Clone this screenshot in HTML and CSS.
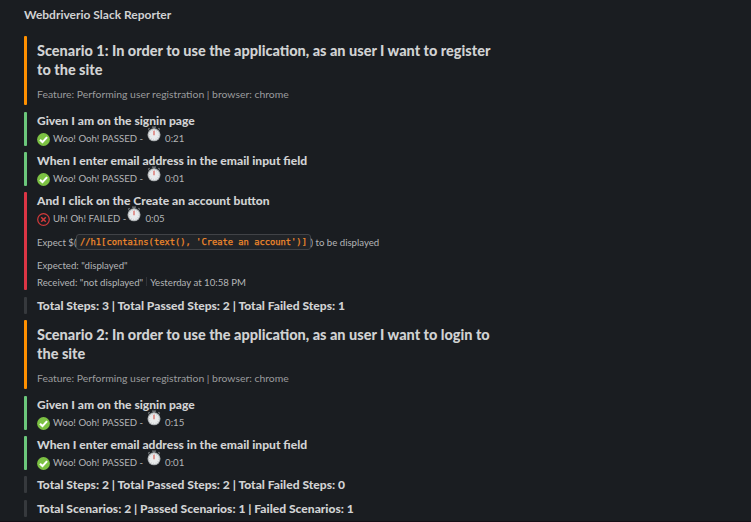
FILE: index.html
```
<!DOCTYPE html>
<html lang="en">
<head>
<meta charset="utf-8">
<title>Webdriverio Slack Reporter</title>
<link rel="stylesheet" href="styles.css">
</head>
<body>
<svg class="defs" aria-hidden="true">
  <symbol id="check" viewBox="0 0 13 13"><circle cx="6.5" cy="6.5" r="6.4" fill="#7cc143"/><path d="M3 6.7l2.5 2.4 4.6-5" fill="none" stroke="#fff" stroke-width="2.1"/></symbol>
  <symbol id="cross" viewBox="0 0 13 13"><circle cx="6.5" cy="6.5" r="5.8" fill="none" stroke="#d23a3b" stroke-width="1.2"/><path d="M4.2 4.2l4.6 4.6m0-4.6L4.2 8.8" fill="none" stroke="#d23a3b" stroke-width="1.5"/></symbol>
  <symbol id="watch" viewBox="0 0 16 16"><path d="M6 1.2h4M8 1v2M2.2 3.4l1.4-1.2M13.8 3.4l-1.4-1.2" stroke="#777b7e" stroke-width="1.3" fill="none"/><circle cx="8" cy="8.8" r="6.5" fill="#a9adb0"/><circle cx="8" cy="8.8" r="5.5" fill="#e9ebec"/><circle cx="8" cy="8.8" r="4.6" fill="none" stroke="#b9bdc0" stroke-width=".8" stroke-dasharray=".8 1.55"/><path d="M8 4.8v4.5" stroke="#d9534b" stroke-width="1.1"/></symbol>
</svg>
<main class="message">
  <h1 class="title"><span>Webdriverio Slack Reporter</span></h1>

  <section class="block scenario">
    <h2>Scenario 1: In order to use the application, as an user I want to register<br>to the site</h2>
    <p class="feature">Feature: Performing user registration | browser: chrome</p>
  </section>
  <section class="block passed">
    <h3>Given I am on the signin page</h3>
    <p class="result"><svg class="status"><use href="#check"/></svg><span class="label">Woo! Ooh! PASSED -</span><svg class="watch"><use href="#watch"/></svg><span>0:21</span></p>
  </section>
  <section class="block passed">
    <h3>When I enter email address in the email input field</h3>
    <p class="result"><svg class="status"><use href="#check"/></svg><span class="label">Woo! Ooh! PASSED -</span><svg class="watch"><use href="#watch"/></svg><span>0:01</span></p>
  </section>
  <section class="block failed">
    <h3>And I click on the Create an account button</h3>
    <p class="result"><svg class="status"><use href="#cross"/></svg><span class="label">Uh! Oh! FAILED -</span><svg class="watch"><use href="#watch"/></svg><span>0:05</span></p>
    <p class="expect">Expect $(<code>//h1[contains(text(), 'Create an account')]</code>) to be displayed</p>
    <p class="detail">Expected: "displayed"</p>
    <p class="detail">Received: "not displayed"<i class="divider"></i>Yesterday at 10:58 PM</p>
  </section>
  <section class="block total"><h3>Total Steps: 3 | Total Passed Steps: 2 | Total Failed Steps: 1</h3></section>

  <section class="block scenario">
    <h2>Scenario 2: In order to use the application, as an user I want to login to<br>the site</h2>
    <p class="feature">Feature: Performing user registration | browser: chrome</p>
  </section>
  <section class="block passed">
    <h3>Given I am on the signin page</h3>
    <p class="result"><svg class="status"><use href="#check"/></svg><span class="label">Woo! Ooh! PASSED -</span><svg class="watch"><use href="#watch"/></svg><span>0:15</span></p>
  </section>
  <section class="block passed">
    <h3>When I enter email address in the email input field</h3>
    <p class="result"><svg class="status"><use href="#check"/></svg><span class="label">Woo! Ooh! PASSED -</span><svg class="watch"><use href="#watch"/></svg><span>0:01</span></p>
  </section>
  <section class="block total"><h3>Total Steps: 2 | Total Passed Steps: 2 | Total Failed Steps: 0</h3></section>
  <section class="block total"><h3>Total Scenarios: 2 | Passed Scenarios: 1 | Failed Scenarios: 1</h3></section>
</main>
</body>
</html>
```

FILE: styles.css
```
* { box-sizing: border-box; margin: 0; padding: 0; }
body { height: 522px; overflow: hidden; background: #1a1d21; border-bottom: 1px solid #160f17; font-family: Lato, "Liberation Sans", sans-serif; color: #d1d2d3; white-space: nowrap; }
.defs { position: absolute; width: 0; height: 0; }
.message { display: flex; flex-direction: column; gap: 6px; padding: 6px 24px 0; }
.title { height: 24px; font-size: 12px; line-height: 18px; font-weight: 700; }
.block { padding-left: 13px; position: relative; }
.block::before { content: ""; position: absolute; left: 0; top: 0; bottom: 0; width: 3px; border-radius: 1px; background: #36393d; }
.scenario { height: 69px; margin-bottom: 1px; padding-top: 5px; }
.scenario::before { background: #ff9000; }
.passed { height: 34px; }
.passed::before { background: #6bc77b; }
.failed { height: 98px; margin-bottom: 1px; }
.failed::before { background: #dc3545; }
.total { height: 17px; }
.total + .total { margin-top: 1px; }
h2 { font-size: 14.49px; line-height: 19px; font-weight: 900; }
h3 { font-size: 12.07px; line-height: 17px; font-weight: 900; }
.feature { margin-top: 7px; font-size: 10.4px; line-height: 16px; color: #9b9c9e; }
.result, .expect, .detail { font-size: 9.63px; color: #b4b5b7; }
.result { display: flex; height: 17px; line-height: 18px; }
.status { width: 13px; height: 13px; margin: 4px 3px 0 0; }
.watch { width: 16px; height: 16px; margin: -3px 3px 0 3px; }
.failed .watch { margin-left: 0; }
.expect { height: 17px; margin-top: 8px; line-height: 17px; }
.expect code { display: inline-block; height: 16px; margin: 0 -.5px; padding: 0 3px; border: 1px solid #414347; border-radius: 3px; background: #212428; color: #f0892b; font: 8.77px/15px "DejaVu Sans Mono", monospace; -webkit-text-stroke: .25px #f0892b; vertical-align: top; }
.detail { line-height: 17px; }
.expect + .detail { margin-top: 6px; }
.divider { display: inline-block; width: 1px; height: 9px; margin: 0 3px; background: #303338; }
```
